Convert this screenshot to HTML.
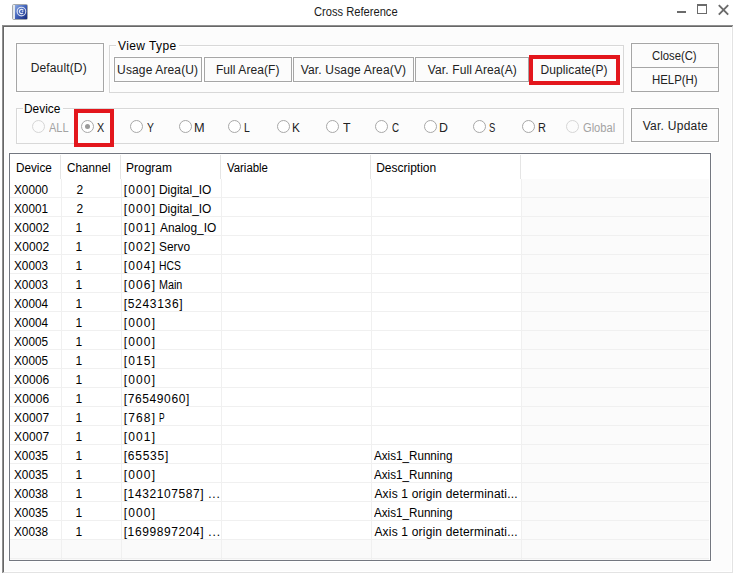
<!DOCTYPE html><html><head><meta charset="utf-8"><style>
html,body{margin:0;padding:0;}
body{width:735px;height:577px;position:relative;overflow:hidden;background:#fff;font-family:'Liberation Sans', sans-serif;}
.a{position:absolute;box-sizing:border-box;}
.t{position:absolute;font:12px/14px 'Liberation Sans', sans-serif;white-space:nowrap;}
.btn{position:absolute;box-sizing:border-box;border:1px solid #a6a6a6;background:#fcfcfc;box-shadow:0 0 0 1px #fff;}
.grp{position:absolute;box-sizing:border-box;border:1px solid #d8d8d8;box-shadow:inset 1px 1px 0 #fff;}
.gap{position:absolute;background:#fcfcfc;}
.red{position:absolute;box-sizing:border-box;border:4px solid #e3161c;}
.rad{position:absolute;box-sizing:border-box;width:13px;height:13px;border-radius:50%;border:1px solid #a8a8a8;background:#fff;top:120px;}
.rad.dis{border-color:#d6d6d6;background:#fcfcfc;}
.hl{position:absolute;height:1px;background:#f0f0f0;}
.vl{position:absolute;width:1px;background:#f0f0f0;}
.hs{position:absolute;width:1px;background:#e5e5e5;top:155px;height:24px;}
</style></head><body><svg class="a" style="left:12px;top:4px" width="16" height="16" viewBox="0 0 16 16">
<defs><linearGradient id="g" x1="0" y1="0" x2="1" y2="1"><stop offset="0" stop-color="#8aa8e2"/><stop offset="0.45" stop-color="#4566bd"/><stop offset="1" stop-color="#15297c"/></linearGradient></defs>
<rect x="0.5" y="0.5" width="15" height="15" rx="1.2" fill="#d5d9dd" stroke="#a4a8ad"/>
<rect x="1" y="1" width="2" height="14" fill="#e3e8ec"/>
<rect x="3" y="1" width="12" height="14" fill="url(#g)"/>
<circle cx="9.45" cy="7.55" r="4.3" fill="none" stroke="#fff" stroke-width="1.1" opacity="0.8"/>
<path d="M11.3 6.3 A2.1 2.1 0 1 0 11.0 9.0" fill="none" stroke="#fff" stroke-width="1.2" opacity="0.85"/>
<path d="M9.8 7.4 L11.4 7.4" stroke="#fff" stroke-width="1.1" opacity="0.7"/>
</svg><div class="a" style="left:677px;top:11px;width:9px;height:2px;background:#6b6b6b"></div><div class="a" style="left:697px;top:4px;width:10px;height:10px;border:1px solid #6b6b6b;border-top-width:2px"></div><svg class="a" style="left:717px;top:4px" width="13" height="12" viewBox="0 0 13 12"><path d="M1.8 1.2 L11.2 10.6 M11.2 1.2 L1.8 10.6" stroke="#6b6b6b" stroke-width="1.9" fill="none"/></svg><div class="a" style="left:2px;top:25px;width:731px;height:548px;border-top:2px solid #676767;border-left:2px solid #676767;border-right:1px solid #e3e3e3;border-bottom:1px solid #e3e3e3;background:#fcfcfc;box-shadow:inset 1px 1px 0 #fff,inset -1px -1px 0 #fff"></div><div class="a" style="left:2px;top:25px;width:731px;height:1px;background:#8f8f8f"></div><div class="a" style="left:2px;top:25px;width:1px;height:548px;background:#8f8f8f"></div><div class="btn" style="left:16px;top:43px;width:88px;height:49px"></div><div class="grp" style="left:109px;top:45px;width:515px;height:48px"></div><div class="gap" style="left:116px;top:44px;width:63px;height:3px"></div><div class="btn" style="left:114px;top:57px;width:88px;height:25px"></div><div class="btn" style="left:204px;top:57px;width:88px;height:25px"></div><div class="btn" style="left:293px;top:57px;width:121px;height:25px"></div><div class="btn" style="left:415px;top:57px;width:114px;height:25px"></div><div class="btn" style="left:530px;top:57px;width:88px;height:25px"></div><div class="red" style="left:529px;top:55px;width:91px;height:30px"></div><div class="btn" style="left:631px;top:43px;width:88px;height:25px"></div><div class="btn" style="left:631px;top:67px;width:88px;height:25px;box-shadow:none"></div><div class="grp" style="left:16px;top:108px;width:608px;height:36px"></div><div class="gap" style="left:23px;top:107px;width:40px;height:3px"></div><div class="rad dis" style="left:32px"></div><div class="rad" style="left:81px"></div><div class="rad" style="left:130px"></div><div class="rad" style="left:179px"></div><div class="rad" style="left:228px"></div><div class="rad" style="left:277px"></div><div class="rad" style="left:326px"></div><div class="rad" style="left:375px"></div><div class="rad" style="left:424px"></div><div class="rad" style="left:473px"></div><div class="rad" style="left:522px"></div><div class="a" style="left:85px;top:124px;width:5px;height:5px;border-radius:50%;background:#9a9a9a"></div><div class="rad dis" style="left:566px"></div><div class="red" style="left:74px;top:109px;width:40px;height:38px"></div><div class="btn" style="left:631px;top:108px;width:88px;height:34px"></div><div class="a" style="left:9px;top:153px;width:702px;height:408px;border:1px solid #737780;background:#fff;box-shadow:0 0 0 1px #fff"></div><div class="a" style="left:522px;top:179px;width:187px;height:381px;background:#fbfbfb"></div><div class="a" style="left:10px;top:540px;width:699px;height:20px;background:#fafafa"></div><div class="hl" style="left:10px;top:197px;width:699px"></div><div class="hl" style="left:10px;top:216px;width:699px"></div><div class="hl" style="left:10px;top:235px;width:699px"></div><div class="hl" style="left:10px;top:254px;width:699px"></div><div class="hl" style="left:10px;top:273px;width:699px"></div><div class="hl" style="left:10px;top:292px;width:699px"></div><div class="hl" style="left:10px;top:311px;width:699px"></div><div class="hl" style="left:10px;top:330px;width:699px"></div><div class="hl" style="left:10px;top:349px;width:699px"></div><div class="hl" style="left:10px;top:368px;width:699px"></div><div class="hl" style="left:10px;top:387px;width:699px"></div><div class="hl" style="left:10px;top:406px;width:699px"></div><div class="hl" style="left:10px;top:425px;width:699px"></div><div class="hl" style="left:10px;top:444px;width:699px"></div><div class="hl" style="left:10px;top:463px;width:699px"></div><div class="hl" style="left:10px;top:482px;width:699px"></div><div class="hl" style="left:10px;top:501px;width:699px"></div><div class="hl" style="left:10px;top:520px;width:699px"></div><div class="hl" style="left:10px;top:539px;width:699px"></div><div class="hl" style="left:10px;top:558px;width:699px"></div><div class="vl" style="left:61px;top:179px;height:381px"></div><div class="hs" style="left:60px"></div><div class="vl" style="left:121px;top:179px;height:381px"></div><div class="hs" style="left:120px"></div><div class="vl" style="left:221px;top:179px;height:381px"></div><div class="hs" style="left:220px"></div><div class="vl" style="left:371px;top:179px;height:381px"></div><div class="hs" style="left:370px"></div><div class="vl" style="left:521px;top:179px;height:381px"></div><div class="hs" style="left:520px"></div><div class="t" style="left:314.40px;top:5px;color:#1a1a1a;transform:scaleX(0.9289);transform-origin:0 0;">Cross Reference</div><div class="t" style="left:30.70px;top:61px;color:#222;letter-spacing:0.144px;">Default(D)</div><div class="t" style="left:118.00px;top:39px;color:#000;letter-spacing:0.413px;">View Type</div><div class="t" style="left:117.10px;top:63px;color:#222;letter-spacing:0.133px;">Usage Area(U)</div><div class="t" style="left:215.90px;top:63px;color:#222;letter-spacing:0.082px;">Full Area(F)</div><div class="t" style="left:300.70px;top:63px;color:#222;letter-spacing:0.171px;">Var. Usage Area(V)</div><div class="t" style="left:427.80px;top:63px;color:#222;letter-spacing:0.119px;">Var. Full Area(A)</div><div class="t" style="left:540.60px;top:63px;color:#222;letter-spacing:0.082px;">Duplicate(P)</div><div class="t" style="left:652.30px;top:49px;color:#222;transform:scaleX(0.9426);transform-origin:0 0;">Close(C)</div><div class="t" style="left:651.55px;top:73px;color:#222;transform:scaleX(0.9511);transform-origin:0 0;">HELP(H)</div><div class="t" style="left:24.11px;top:102px;color:#000;transform:scaleX(0.9917);transform-origin:0 0;">Device</div><div class="t" style="left:48.70px;top:121px;color:#a3a3a3;transform:scaleX(0.9190);transform-origin:0 0;">ALL</div><div class="t" style="left:96.80px;top:121px;color:#222;transform:scaleX(0.9000);transform-origin:0 0;">X</div><div class="t" style="left:146.90px;top:121px;color:#222;transform:scaleX(0.8625);transform-origin:0 0;">Y</div><div class="t" style="left:194.04px;top:121px;color:#222;transform:scaleX(1.0625);transform-origin:0 0;">M</div><div class="t" style="left:243.73px;top:121px;color:#222;transform:scaleX(0.8667);transform-origin:0 0;">L</div><div class="t" style="left:292.21px;top:121px;color:#222;transform:scaleX(0.9857);transform-origin:0 0;">K</div><div class="t" style="left:342.80px;top:121px;color:#222;transform:scaleX(1.0286);transform-origin:0 0;">T</div><div class="t" style="left:391.60px;top:121px;color:#222;transform:scaleX(0.8125);transform-origin:0 0;">C</div><div class="t" style="left:439.17px;top:121px;color:#222;transform:scaleX(1.0286);transform-origin:0 0;">D</div><div class="t" style="left:489.01px;top:121px;color:#222;transform:scaleX(0.7857);transform-origin:0 0;">S</div><div class="t" style="left:537.69px;top:121px;color:#222;transform:scaleX(0.9143);transform-origin:0 0;">R</div><div class="t" style="left:582.70px;top:121px;color:#a3a3a3;transform:scaleX(0.9265);transform-origin:0 0;">Global</div><div class="t" style="left:642.70px;top:119px;color:#222;letter-spacing:0.260px;">Var. Update</div><div class="t" style="left:16.22px;top:161px;color:#000;transform:scaleX(0.9778);transform-origin:0 0;">Device</div><div class="t" style="left:67.40px;top:161px;color:#000;transform:scaleX(0.9727);transform-origin:0 0;">Channel</div><div class="t" style="left:126.10px;top:161px;color:#000;transform:scaleX(0.9978);transform-origin:0 0;">Program</div><div class="t" style="left:227.40px;top:161px;color:#000;transform:scaleX(0.9488);transform-origin:0 0;">Variable</div><div class="t" style="left:376.20px;top:161px;color:#000;">Description</div><div class="t" style="left:14.10px;top:183px;color:#000;transform:scaleX(0.9800);transform-origin:0 0;">X0000</div><div class="t" style="left:76.40px;top:183px;color:#000;">2</div><div class="t" style="left:123.70px;top:183px;color:#000;letter-spacing:1.150px;">[000]</div><div class="t" style="left:158.91px;top:183px;color:#000;transform:scaleX(0.9941);transform-origin:0 0;">Digital_IO</div><div class="t" style="left:14.10px;top:202px;color:#000;transform:scaleX(0.9800);transform-origin:0 0;">X0001</div><div class="t" style="left:76.40px;top:202px;color:#000;">2</div><div class="t" style="left:123.70px;top:202px;color:#000;letter-spacing:1.150px;">[000]</div><div class="t" style="left:158.91px;top:202px;color:#000;transform:scaleX(0.9941);transform-origin:0 0;">Digital_IO</div><div class="t" style="left:14.10px;top:221px;color:#000;letter-spacing:0.075px;">X0002</div><div class="t" style="left:75.40px;top:221px;color:#000;">1</div><div class="t" style="left:123.70px;top:221px;color:#000;letter-spacing:1.150px;">[001]</div><div class="t" style="left:159.90px;top:221px;color:#000;transform:scaleX(0.9911);transform-origin:0 0;">Analog_IO</div><div class="t" style="left:14.10px;top:240px;color:#000;letter-spacing:0.075px;">X0002</div><div class="t" style="left:75.40px;top:240px;color:#000;">1</div><div class="t" style="left:123.70px;top:240px;color:#000;letter-spacing:1.150px;">[002]</div><div class="t" style="left:158.91px;top:240px;color:#000;transform:scaleX(0.9900);transform-origin:0 0;">Servo</div><div class="t" style="left:14.10px;top:259px;color:#000;transform:scaleX(0.9800);transform-origin:0 0;">X0003</div><div class="t" style="left:75.40px;top:259px;color:#000;">1</div><div class="t" style="left:123.70px;top:259px;color:#000;letter-spacing:1.150px;">[004]</div><div class="t" style="left:159.04px;top:259px;color:#000;transform:scaleX(0.8625);transform-origin:0 0;">HCS</div><div class="t" style="left:14.10px;top:278px;color:#000;transform:scaleX(0.9800);transform-origin:0 0;">X0003</div><div class="t" style="left:75.40px;top:278px;color:#000;">1</div><div class="t" style="left:123.70px;top:278px;color:#000;letter-spacing:1.150px;">[006]</div><div class="t" style="left:159.00px;top:278px;color:#000;transform:scaleX(0.8960);transform-origin:0 0;">Main</div><div class="t" style="left:14.10px;top:297px;color:#000;transform:scaleX(0.9800);transform-origin:0 0;">X0004</div><div class="t" style="left:75.40px;top:297px;color:#000;">1</div><div class="t" style="left:123.70px;top:297px;color:#000;letter-spacing:0.700px;">[5243136]</div><div class="t" style="left:14.10px;top:316px;color:#000;transform:scaleX(0.9800);transform-origin:0 0;">X0004</div><div class="t" style="left:75.40px;top:316px;color:#000;">1</div><div class="t" style="left:123.70px;top:316px;color:#000;letter-spacing:1.150px;">[000]</div><div class="t" style="left:14.10px;top:335px;color:#000;transform:scaleX(0.9800);transform-origin:0 0;">X0005</div><div class="t" style="left:75.40px;top:335px;color:#000;">1</div><div class="t" style="left:123.70px;top:335px;color:#000;letter-spacing:1.150px;">[000]</div><div class="t" style="left:14.10px;top:354px;color:#000;transform:scaleX(0.9800);transform-origin:0 0;">X0005</div><div class="t" style="left:75.40px;top:354px;color:#000;">1</div><div class="t" style="left:123.70px;top:354px;color:#000;letter-spacing:1.150px;">[015]</div><div class="t" style="left:14.10px;top:373px;color:#000;letter-spacing:0.075px;">X0006</div><div class="t" style="left:75.40px;top:373px;color:#000;">1</div><div class="t" style="left:123.70px;top:373px;color:#000;letter-spacing:1.150px;">[000]</div><div class="t" style="left:14.10px;top:392px;color:#000;letter-spacing:0.075px;">X0006</div><div class="t" style="left:75.40px;top:392px;color:#000;">1</div><div class="t" style="left:123.70px;top:392px;color:#000;letter-spacing:0.622px;">[76549060]</div><div class="t" style="left:14.10px;top:411px;color:#000;letter-spacing:0.075px;">X0007</div><div class="t" style="left:75.40px;top:411px;color:#000;">1</div><div class="t" style="left:123.70px;top:411px;color:#000;letter-spacing:1.150px;">[768]</div><div class="t" style="left:159.20px;top:411px;color:#000;transform:scaleX(0.7000);transform-origin:0 0;">P</div><div class="t" style="left:14.10px;top:430px;color:#000;letter-spacing:0.075px;">X0007</div><div class="t" style="left:75.40px;top:430px;color:#000;">1</div><div class="t" style="left:123.70px;top:430px;color:#000;letter-spacing:1.150px;">[001]</div><div class="t" style="left:14.10px;top:449px;color:#000;transform:scaleX(0.9800);transform-origin:0 0;">X0035</div><div class="t" style="left:75.40px;top:449px;color:#000;">1</div><div class="t" style="left:123.70px;top:449px;color:#000;letter-spacing:0.767px;">[65535]</div><div class="t" style="left:374.40px;top:449px;color:#000;transform:scaleX(0.9713);transform-origin:0 0;">Axis1_Running</div><div class="t" style="left:14.10px;top:468px;color:#000;transform:scaleX(0.9800);transform-origin:0 0;">X0035</div><div class="t" style="left:75.40px;top:468px;color:#000;">1</div><div class="t" style="left:123.70px;top:468px;color:#000;letter-spacing:1.150px;">[000]</div><div class="t" style="left:374.40px;top:468px;color:#000;transform:scaleX(0.9713);transform-origin:0 0;">Axis1_Running</div><div class="t" style="left:14.10px;top:487px;color:#000;transform:scaleX(0.9800);transform-origin:0 0;">X0038</div><div class="t" style="left:75.40px;top:487px;color:#000;">1</div><div class="t" style="left:123.70px;top:487px;color:#000;letter-spacing:0.600px;">[1432107587]</div><div class="t" style="left:208.20px;top:487px;color:#000;letter-spacing:0.800px;">...</div><div class="t" style="left:374.40px;top:487px;color:#000;letter-spacing:0.189px;">Axis 1 origin determinati...</div><div class="t" style="left:14.10px;top:506px;color:#000;transform:scaleX(0.9800);transform-origin:0 0;">X0035</div><div class="t" style="left:75.40px;top:506px;color:#000;">1</div><div class="t" style="left:123.70px;top:506px;color:#000;letter-spacing:1.150px;">[000]</div><div class="t" style="left:374.40px;top:506px;color:#000;transform:scaleX(0.9713);transform-origin:0 0;">Axis1_Running</div><div class="t" style="left:14.10px;top:525px;color:#000;transform:scaleX(0.9800);transform-origin:0 0;">X0038</div><div class="t" style="left:75.40px;top:525px;color:#000;">1</div><div class="t" style="left:123.70px;top:525px;color:#000;letter-spacing:0.600px;">[1699897204]</div><div class="t" style="left:208.20px;top:525px;color:#000;letter-spacing:0.950px;">...</div><div class="t" style="left:374.40px;top:525px;color:#000;letter-spacing:0.189px;">Axis 1 origin determinati...</div></body></html>
